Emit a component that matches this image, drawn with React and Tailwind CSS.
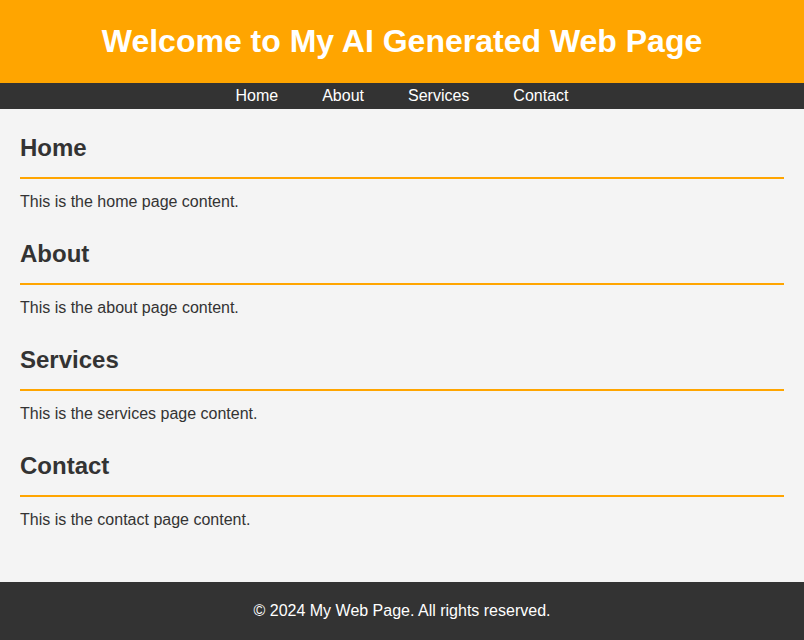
import React from "react";

const SECTIONS = [
  { title: "Home", text: "This is the home page content." },
  { title: "About", text: "This is the about page content." },
  { title: "Services", text: "This is the services page content." },
  { title: "Contact", text: "This is the contact page content." },
];

const NAV = ["Home", "About", "Services", "Contact"];

const App = () => {
  return (
    <div className="min-h-screen bg-[#f4f4f4] text-[#333] font-['Liberation_Sans',Arial,sans-serif]">
      <header className="h-[83px] bg-[#ffa500] flex items-center justify-center">
        <h1 className="text-[32px] font-bold text-white leading-[37px]">
          Welcome to My AI Generated Web Page
        </h1>
      </header>

      <nav className="h-[26px] bg-[#333] flex items-center justify-center gap-[44px]">
        {NAV.map((item) => (
          <a key={item} href={`#${item.toLowerCase()}`} className="text-white text-base leading-[18px]">
            {item}
          </a>
        ))}
      </nav>

      <main className="px-5 pt-[25px] pb-[53px] flex flex-col gap-[29px]">
        {SECTIONS.map((s) => (
          <section key={s.title} id={s.title.toLowerCase()}>
            <h2 className="text-2xl font-bold leading-[28px] pb-[15px] border-b-2 border-[#ffa500]">
              {s.title}
            </h2>
            <p className="mt-[14px] text-base leading-[18px]">{s.text}</p>
          </section>
        ))}
      </main>

      <footer className="h-[58px] bg-[#333] text-white flex items-center justify-center text-base">
        © 2024 My Web Page. All rights reserved.
      </footer>
    </div>
  );
};

export default App;
